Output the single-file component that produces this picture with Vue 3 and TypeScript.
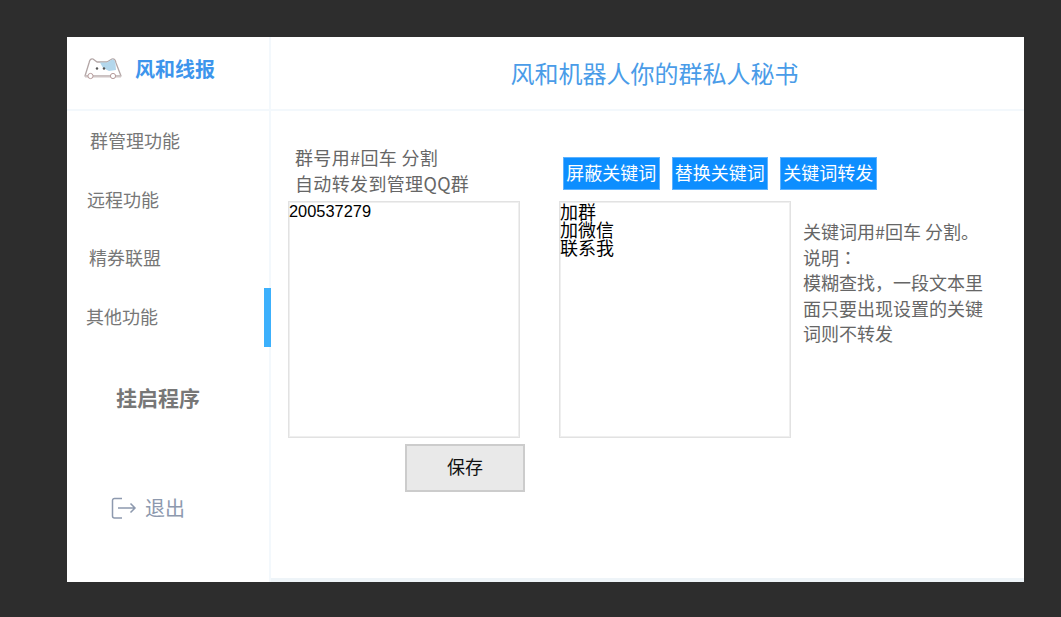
<template>
  <div class="page">
    <div class="window">
      <aside class="sidebar">
        <div class="brand">
          <svg class="logo" width="40" height="26" viewBox="0 0 40 26">
            <path d="M1 20 L5 7 Q6 2 9 3 L13 6 H23 L28 3 Q31 2 32 7 L37 20 Z" fill="#fff" stroke="#b3a6a6" stroke-width="1.3" stroke-linejoin="round" />
            <path d="M16 6.6 H23 L28 3.6 Q30.5 3 31.4 7 L32 14 L25 15 L19 12 Z" fill="#b3d7ec" />
            <circle cx="13" cy="12.5" r="1.2" fill="#555" />
            <circle cx="20" cy="12.5" r="1.2" fill="#555" />
            <path d="M1 20.5 H37" stroke="#cfc5c5" stroke-width="2" />
            <circle cx="6.5" cy="20" r="2.6" fill="#fff" stroke="#b59a9a" />
            <circle cx="29" cy="20" r="2.6" fill="#fff" stroke="#b59a9a" />
          </svg>
          <span class="brand-name">风和线报</span>
        </div>
        <nav class="menu">
          <div
            v-for="item in menuItems"
            :key="item.label"
            class="menu-item"
            :class="[item.cls, { active: item.active }]"
          >
            {{ item.label }}
          </div>
        </nav>
        <div class="hang-up">挂启程序</div>
        <div class="logout">
          <svg width="26" height="24" viewBox="0 0 26 24" fill="none" stroke="#8d99ae" stroke-width="1.5">
            <path d="M11 2.5 H3.5 a2 2 0 0 0 -2 2 V20 a2 2 0 0 0 2 2 H11" />
            <path d="M7 12 H24 M19.5 7.5 L24 12 L19.5 16.5" />
          </svg>
          <span>退出</span>
        </div>
      </aside>
      <main class="main">
        <header class="top">风和机器人你的群私人秘书</header>
        <section class="content">
          <div class="col-left">
            <div class="hint">
              <div>群号用#回车 分割</div>
              <div>自动转发到管理QQ群</div>
            </div>
            <textarea class="box box-num" v-model="groupIds"></textarea>
            <button class="save">保存</button>
          </div>
          <div class="col-right">
            <div class="tabs">
              <button v-for="tab in tabs" :key="tab" class="tab">{{ tab }}</button>
            </div>
            <div class="keyword-row">
              <textarea class="box box-words" v-model="keywords"></textarea>
              <div class="note">
                <div>关键词用#回车 分割。</div>
                <div>说明<span class="colon">：</span></div>
                <div>模糊查找，一段文本里面只要出现设置的关键词则不转发</div>
              </div>
            </div>
          </div>
        </section>
      </main>
    </div>
  </div>
</template>

<script setup lang="ts">
import { ref } from 'vue'

interface MenuItem {
  label: string
  cls: string
  active?: boolean
}

const menuItems: MenuItem[] = [
  { label: '群管理功能', cls: 'i1' },
  { label: '远程功能', cls: 'i2' },
  { label: '精券联盟', cls: 'i3' },
  { label: '其他功能', cls: 'i4', active: true }
]

const tabs = ['屏蔽关键词', '替换关键词', '关键词转发']

const groupIds = ref('200537279')
const keywords = ref('加群\n加微信\n联系我')
</script>

<style>
html,
body {
  margin: 0;
  background: #2d2d2d;
}
</style>

<style scoped>
.page {
  width: 1061px;
  height: 617px;
  padding: 37px 37px 35px 67px;
  box-sizing: border-box;
  background: #2d2d2d;
  font-family: 'Noto Sans CJK SC', 'Liberation Sans', sans-serif;
  overflow: hidden;
}

.window {
  display: flex;
  height: 545px;
  background: #fff;
}

.sidebar {
  width: 204px;
  flex: none;
  box-sizing: border-box;
  border-right: 2px solid #f3f8fc;
  display: flex;
  flex-direction: column;
}

.brand {
  height: 74px;
  box-sizing: border-box;
  border-bottom: 2px solid #f3f8fc;
  display: flex;
  align-items: center;
  padding: 0 0 8px 17px;
  gap: 11px;
}

.brand-name {
  font-size: 20px;
  font-weight: 700;
  color: #3d95ec;
  line-height: 26px;
}

.menu {
  padding-top: 1px;
}

.menu-item {
  height: 58.7px;
  line-height: 56px;
  font-size: 18px;
  color: #777;
  position: relative;
}

.i1 {
  padding-left: 23px;
}

.i2 {
  padding-left: 20px;
}

.i3 {
  padding-left: 22px;
}

.i4 {
  padding-left: 19px;
}

.menu-item.active::after {
  content: '';
  position: absolute;
  right: -2px;
  top: 0;
  width: 7px;
  height: 59px;
  background: #3cb0fc;
}

.hang-up {
  margin-top: 35px;
  padding-left: 49px;
  font-size: 21px;
  font-weight: 700;
  line-height: 30px;
  color: #777;
}

.logout {
  margin-top: 82px;
  padding-left: 44px;
  display: flex;
  align-items: center;
  gap: 8px;
  font-size: 20px;
  line-height: 28px;
  color: #8d99ae;
}

.main {
  flex: 1;
  display: flex;
  flex-direction: column;
  border-bottom: 4px solid #eef4f8;
}

.top {
  height: 74px;
  box-sizing: border-box;
  border-bottom: 2px solid #f3f8fc;
  text-align: center;
  font-size: 24px;
  line-height: 72px;
  color: #4a9ce8;
  padding-left: 14px;
}

.content {
  display: flex;
  padding: 33px 0 0 17px;
  gap: 35px;
}

.col-left {
  width: 236px;
}

.hint {
  padding-left: 7px;
  font-size: 18px;
  line-height: 26px;
  letter-spacing: 0.35px;
  color: #666;
  height: 57px;
}

.box {
  display: block;
  width: 232px;
  height: 237px;
  box-sizing: border-box;
  border: 1px solid #e2e2e2;
  box-shadow: inset 0 0 0 1px #efefef;
  background: #fff;
  padding: 0;
  margin: 0;
  outline: none;
  resize: none;
  overflow: hidden;
  color: #000;
  border-radius: 0;
}

.box-num {
  font-family: 'Liberation Sans', sans-serif;
  font-size: 16.4px;
  line-height: 18px;
}

.box-words {
  font-family: 'Noto Sans CJK SC', sans-serif;
  font-size: 18px;
  line-height: 18px;
  flex: none;
}

.save {
  display: block;
  width: 120px;
  height: 48px;
  margin: 6px 0 0 117px;
  box-sizing: border-box;
  border: 2px solid #ccc;
  background: #e9e9e9;
  font-family: 'Noto Sans CJK SC', sans-serif;
  font-size: 18px;
  color: #111;
  padding: 0 0 4px;
}

.tabs {
  display: flex;
  gap: 12px;
  padding-left: 4px;
  margin: 13px 0 11px;
  height: 33px;
}

.tab {
  width: 96.5px;
  height: 33px;
  box-sizing: border-box;
  border: 1px solid #5db2ff;
  background: #0d8eff;
  color: #fff;
  padding: 0 0 3px;
  font-family: 'Noto Sans CJK SC', sans-serif;
  font-size: 18px;
  white-space: nowrap;
}

.keyword-row {
  display: flex;
  gap: 12px;
}

.note {
  width: 184px;
  padding-top: 18px;
  font-size: 18px;
  line-height: 25.6px;
  color: #666;
}

.colon {
  font-family: 'Noto Sans CJK TC', sans-serif;
}
</style>
